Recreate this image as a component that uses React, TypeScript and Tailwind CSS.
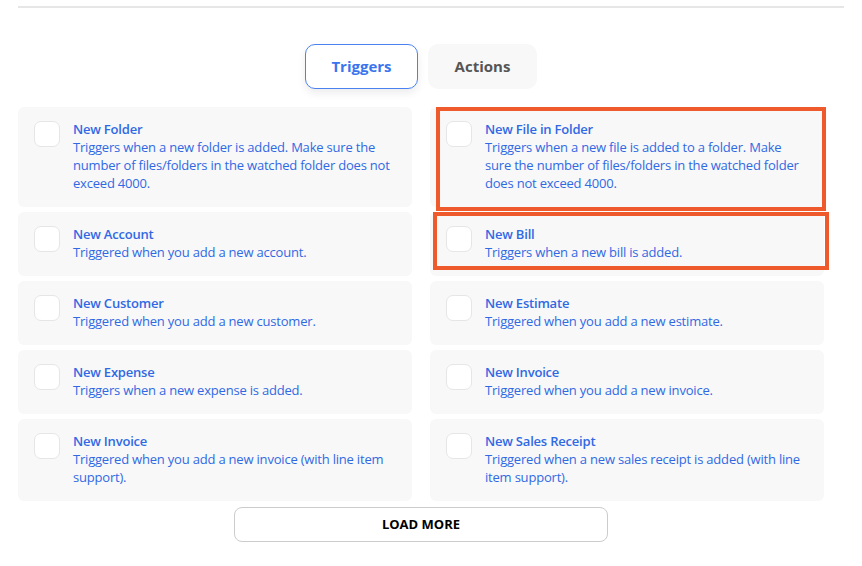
import React from "react";

type Item = { title: string; desc: string };

const left: Item[] = [
  { title: "New Folder", desc: "Triggers when a new folder is added. Make sure the number of files/folders in the watched folder does not exceed 4000." },
  { title: "New Account", desc: "Triggered when you add a new account." },
  { title: "New Customer", desc: "Triggered when you add a new customer." },
  { title: "New Expense", desc: "Triggers when a new expense is added." },
  { title: "New Invoice", desc: "Triggered when you add a new invoice (with line item support)." },
];

const right: Item[] = [
  { title: "New File in Folder", desc: "Triggers when a new file is added to a folder. Make sure the number of files/folders in the watched folder does not exceed 4000." },
  { title: "New Bill", desc: "Triggers when a new bill is added." },
  { title: "New Estimate", desc: "Triggered when you add a new estimate." },
  { title: "New Invoice", desc: "Triggered when you add a new invoice." },
  { title: "New Sales Receipt", desc: "Triggered when a new sales receipt is added (with line item support)." },
];

function Card({ item }: { item: Item }) {
  return (
    <div className="flex min-w-0 gap-[13px] rounded-md bg-[#f8f8f8] pb-[15px] pl-4 pr-4 pt-[13px]">
      <div className="mt-px h-[26px] w-[26px] shrink-0 rounded-[7px] border border-[#e6e6e6] bg-white" />
      <div className="min-w-0 text-[13px] leading-[18px] tracking-[-0.2px] text-[#3069e4]">
        <div className="font-semibold">{item.title}</div>
        <div>{item.desc}</div>
      </div>
    </div>
  );
}

export default function App() {
  const rows = left.map((l, i) => [l, right[i]]);
  return (
    <div
      className="relative h-[566px] w-[862px] overflow-hidden bg-white"
      style={{ fontFamily: '"Open Sans", "Noto Sans", sans-serif' }}
    >
      <div className="mx-[18px] mt-[6px] h-[2px] bg-[#e6e6e6]" />
      <div className="mt-[36px] flex justify-center gap-[10px] pr-[20px]">
        <div className="flex h-[45px] w-[113px] items-center justify-center rounded-[10px] border border-[#4b82f1] bg-white text-[15px] font-bold text-[#3a75ee] shadow-[0_4px_8px_rgba(0,0,0,0.08)]">
          Triggers
        </div>
        <div className="flex h-[45px] w-[109px] items-center justify-center rounded-[10px] bg-[#f8f8f8] text-[15px] font-bold text-[#555555]">
          Actions
        </div>
      </div>
      <div className="mx-[18px] mt-[18px] grid grid-cols-[394px_394px] gap-x-[18px] gap-y-[5px]">
        {rows.map(([l, r], i) => (
          <React.Fragment key={i}>
            <Card item={l} />
            <Card item={r} />
          </React.Fragment>
        ))}
      </div>
      <div className="mt-[6px] flex justify-center pr-[20px]">
        <div className="flex h-[35px] w-[374px] items-center justify-center rounded-lg border border-[#cccccc] bg-white text-[13px] font-bold text-black">
          LOAD MORE
        </div>
      </div>
      <div className="pointer-events-none absolute left-[436px] top-[107px] h-[104px] w-[390px] border-4 border-[#ee5a2b]" />
      <div className="pointer-events-none absolute left-[433px] top-[212px] h-[58px] w-[396px] border-4 border-[#ee5a2b]" />
    </div>
  );
}
